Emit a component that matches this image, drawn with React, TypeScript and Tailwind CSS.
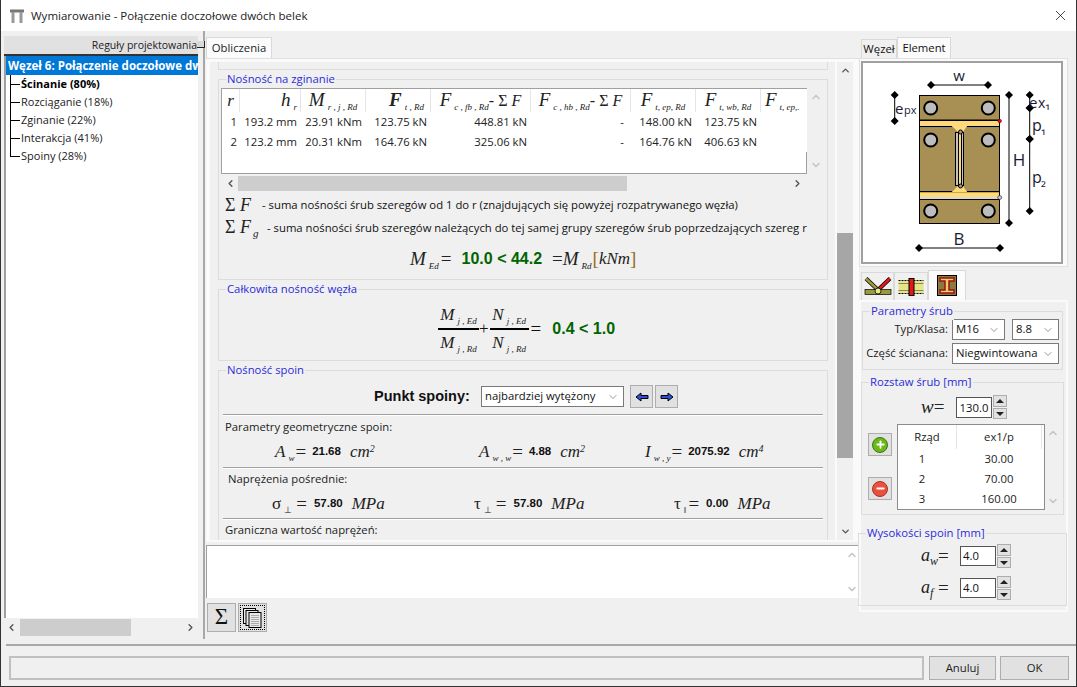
import { ReactNode } from "react";
import { ChevronDown, ChevronLeft, ChevronRight, ChevronUp, Plus, Minus, X } from "lucide-react";

const serif = "[font-family:'Liberation_Serif',serif]";
const arial = "[font-family:'Liberation_Sans',sans-serif]";

function Sym({ b, s, big, bold, plain }: { b: string; s?: string; big?: boolean; bold?: boolean; plain?: boolean }) {
  return (
    <span className={`${serif} ${plain ? "" : "italic"} whitespace-nowrap text-[#222] ${big ? "text-[19px]" : "text-[17px]"} ${bold ? "font-bold" : ""}`}>
      {b}
      {s && <span className="text-[9px] ml-[3px] align-[-4px] font-normal">{s}</span>}
    </span>
  );
}

function Group({ title, className, children }: { title: string; className: string; children?: ReactNode }) {
  return (
    <div className={`relative border border-[#dcdcdc] ${className}`}>
      <span className="absolute top-[-10px] left-[7px] bg-[#f0f0f0] px-px leading-[18px] text-[#2b2bd9] whitespace-nowrap">{title}</span>
      {children}
    </div>
  );
}

function Select({ text, className }: { text: string; className: string }) {
  return (
    <div className={`flex items-center justify-between bg-white border border-[#7a7a7a] pl-[3px] pr-[4px] whitespace-nowrap ${className}`}>
      <span>{text}</span>
      <ChevronDown size={12} strokeWidth={1} className="text-[#333]" />
    </div>
  );
}

function Spin() {
  return (
    <div className="flex flex-col ml-px">
      <div className="w-[14px] h-[12px] bg-[#e1e1e1] border border-[#adadad] flex items-center justify-center">
        <div className="w-0 h-0 border-x-[4px] border-x-transparent border-b-[4px] border-b-[#222]" />
      </div>
      <div className="w-[14px] h-[11px] mt-px bg-[#e1e1e1] border border-[#adadad] flex items-center justify-center">
        <div className="w-0 h-0 border-x-[4px] border-x-transparent border-t-[4px] border-t-[#222]" />
      </div>
    </div>
  );
}

function Hr({ className }: { className: string }) {
  return <div className={`mx-[4px] h-[2px] border-t border-b border-t-[#a0a0a0] border-b-white ${className}`} />;
}

function Dim({ x1, y1, x2, y2 }: { x1: number; y1: number; x2: number; y2: number }) {
  const pts = [
    [x1, y1],
    [x2, y2],
  ];
  return (
    <g>
      <line x1={x1} y1={y1} x2={x2} y2={y2} stroke="#000" />
      {pts.map(([x, y]) => (
        <path key={`${x}-${y}`} d={`M${x - 4} ${y}L${x} ${y - 4}L${x + 4} ${y}L${x} ${y + 4}Z`} fill="#000" />
      ))}
    </g>
  );
}

function Bolt({ x, y }: { x: number; y: number }) {
  return <circle cx={x} cy={y} r="6.5" fill="#bdbdbd" stroke="#000" strokeWidth="2" />;
}

function Diagram() {
  const label = { fontFamily: "'Open Sans', sans-serif", fill: "#1a1a33" };
  return (
    <svg viewBox="864 63 198 199" className="w-full h-full block">
      <rect x="920.5" y="95.5" width="80" height="128" fill="#a89054" stroke="#000" />
      {[108, 140, 211].map((y) => (
        <g key={y}>
          <Bolt x={931.7} y={y} />
          <Bolt x={989.3} y={y} />
        </g>
      ))}
      {/* gorny pas */}
      <rect x="921" y="119.5" width="79" height="1.5" fill="#000" />
      <rect x="921" y="121" width="79" height="5" fill="#ffd97a" />
      <path d="M921 126.5H953M968 126.5H1000" stroke="#000" />
      <path d="M921 127.5H953M968 127.5H1000" stroke="#8a8a8a" />
      <path d="M953 126L959 132H964L968 126Z" fill="#ffd97a" />
      <circle cx="1000.7" cy="121" r="1.8" fill="#e01010" stroke="#600" strokeWidth="0.5" />
      {/* srodnik */}
      <rect x="956.5" y="132.5" width="8" height="53" fill="#c4c4c4" stroke="#000" />
      <rect x="960" y="133" width="2" height="52" fill="#ffd97a" />
      <path d="M959.5 133V185M962.5 133V185" stroke="#000" />
      <circle cx="961.5" cy="132" r="2" fill="#9a9a9a" stroke="#000" />
      {/* dolny pas */}
      <path d="M921 191.5H953M968 191.5H1000" stroke="#000" />
      <path d="M953 192L959 186H964L968 192Z" fill="#ffd97a" />
      <circle cx="961.500" cy="186" r="2" fill="#9a9a9a" stroke="#000" />
      <rect x="921" y="192" width="79" height="5" fill="#ffd97a" />
      <path d="M921 192.5H1000" stroke="#c9a84a" />
      <rect x="921" y="197" width="79" height="2" fill="#d8d8d8" />
      <path d="M921 199.5H1000" stroke="#000" />
      <circle cx="1000.7" cy="197.500" r="2" fill="#c9c9c9" stroke="#000" strokeWidth="0.5" />

      <Dim x1={932} y1={85} x2={989} y2={85} />
      <Dim x1={920} y1={248} x2={1001} y2={248} />
      <Dim x1={1010} y1={95} x2={1010} y2={223} />
      <Dim x1={1030.7} y1={95} x2={1030.7} y2={108} />
      <Dim x1={1030.7} y1={108} x2={1030.7} y2={139} />
      <Dim x1={1030.7} y1={139} x2={1030.7} y2={211} />
      <Dim x1={895.7} y1={95} x2={895.7} y2={121} />

      <text x="960" y="81" textAnchor="middle" fontSize="15" style={label}>w</text>
      <text x="960" y="245" textAnchor="middle" fontSize="17" style={label}>B</text>
      <text x="1020" y="166" textAnchor="middle" fontSize="17" style={label}>H</text>
      <text x="896" y="114" fontSize="15" style={label}>e</text>
      <text x="905" y="114" fontSize="11" style={label}>px</text>
      <text x="1030" y="108" fontSize="15" style={label}>e</text>
      <text x="1039" y="108" fontSize="14" style={label}>x₁</text>
      <text x="1033" y="131" fontSize="16" style={label}>p</text>
      <text x="1042" y="133" fontSize="14" style={label}>₁</text>
      <text x="1033" y="183" fontSize="16" style={label}>p</text>
      <text x="1042" y="185" fontSize="14" style={label}>₂</text>
    </svg>
  );
}

function Arrow({ right }: { right?: boolean }) {
  return (
    <div className="w-[23px] h-[23px] bg-[#e1e1e1] border border-[#adadad] flex items-center justify-center">
      <svg width="14" height="10" viewBox="0 0 14 10" className={right ? "rotate-180" : ""}>
        <path d="M1 5L6 1V3.5H13V6.5H6V9Z" fill="#2b50d8" stroke="#000" />
      </svg>
    </div>
  );
}

const cols = ["w-[18px]", "w-[61px]", "w-[65px]", "w-[65px]", "w-[100px]", "w-[100px]", "w-[65px]", "w-[65px]", "w-[44px]"];
const rows = [
  ["1", "193.2 mm", "23.91 kNm", "123.75 kN", "448.81 kN", "-", "148.00 kN", "123.75 kN", ""],
  ["2", "123.2 mm", "20.31 kNm", "164.76 kN", "325.06 kN", "-", "164.76 kN", "406.63 kN", ""],
];

function BendTable() {
  return (
    <div className="relative w-[586px] h-[86px] bg-white border-l border-y border-[#a0a0a0] overflow-hidden">
      <div className="absolute right-0 bottom-0 w-px h-[21px] bg-[#a0a0a0]" />
      <div className="flex h-[23px] items-center whitespace-nowrap">
        <div className={`${cols[0]} h-full border-r border-[#e5e5e5] flex items-center justify-center`}><Sym b="r" /></div>
        <div className={`${cols[1]} h-full border-r border-[#e5e5e5] flex items-center justify-end pr-[3px]`}><Sym b="h" s="r" big /></div>
        <div className={`${cols[2]} h-full border-r border-[#e5e5e5] flex items-center justify-center`}><Sym b="M" s="r , j , Rd" big /></div>
        <div className={`${cols[3]} h-full border-r border-[#e5e5e5] flex items-center justify-end pr-[6px]`}><Sym b="F" s="t , Rd" bold big /></div>
        <div className={`${cols[4]} h-full border-r border-[#e5e5e5] flex items-center justify-center`}><Sym b="F" s="c , fb , Rd" big /><span className={`${serif} text-[16px] text-[#222]`}>- Σ <i>F</i></span></div>
        <div className={`${cols[5]} h-full border-r border-[#e5e5e5] flex items-center justify-center`}><Sym b="F" s="c , hb , Rd" big /><span className={`${serif} text-[16px] text-[#222]`}>- Σ <i>F</i></span></div>
        <div className={`${cols[6]} h-full border-r border-[#e5e5e5] flex items-center justify-center`}><Sym b="F" s="t, ep, Rd" big /></div>
        <div className={`${cols[7]} h-full border-r border-[#e5e5e5] flex items-center justify-center`}><Sym b="F" s="t, wb, Rd" big /></div>
        <div className={`${cols[8]} h-full flex items-center pl-[4px]`}><Sym b="F" s="t, ep,." big /></div>
      </div>
      <div>
        {rows.map((r) => (
          <div key={r[0]} className="flex h-[20px] items-center whitespace-nowrap text-[#222]">
            {r.map((c, i) => (
              <div key={i} className={`${cols[i]} text-right ${i === 0 ? "pr-[3px]" : i === 5 ? "pr-[7px]" : "pr-[4px]"}`}>{c}</div>
            ))}
          </div>
        ))}
      </div>
    </div>
  );
}

function Value({ v, unit, sup, gap }: { v: string; unit: string; sup?: string; gap: string }) {
  return (
    <>
      <b className={`${gap} ${arial} text-[11.5px]`}>{v}</b>
      <span className={`${serif} italic text-[17px] ml-[9px] text-[#222]`}>{unit}{sup && <sup className="text-[10px]">{sup}</sup>}</span>
    </>
  );
}

function Content() {
  return (
    <div className="h-[478px] w-[625px] bg-[#f0f0f0] overflow-hidden pl-[8px]">
      <div className="h-[8px] w-[610px] border-x border-b border-[#dcdcdc]" />
      <Group title="Nośność na zginanie" className="mt-[9px] w-[610px] h-[201px] pt-[8px] pl-[2px]">
        <div className="flex">
          <BendTable />
          <div className="w-[16px] h-[86px] flex flex-col justify-between items-center py-[3px] text-[#c4c4c4] ml-[1px]">
            <ChevronUp size={12} strokeWidth={3} />
            <ChevronDown size={12} strokeWidth={3} />
          </div>
        </div>
        <div className="mt-[2px] w-[585px] h-[15px] flex items-center text-[#555]">
          <ChevronLeft size={11} strokeWidth={3} className="ml-[2px] w-[15px]" />
          <div className="w-[389px] h-full bg-[#cdcdcd]" />
          <ChevronRight size={11} strokeWidth={3} className="ml-auto mr-[3px]" />
        </div>
        <div className="flex items-center h-[20px] mt-[4px] pl-[4px] whitespace-nowrap w-[585px] overflow-hidden">
          <span className={`${serif} text-[18px] w-[37px] text-[#222]`}>Σ <i>F</i></span>
          <span>- suma nośności śrub szeregów od 1 do r (znajdujących się powyżej rozpatrywanego węzła)</span>
        </div>
        <div className="flex items-center h-[20px] mt-[3px] pl-[4px] whitespace-nowrap w-[585px]">
          <span className={`${serif} text-[18px] w-[42px] shrink-0 text-[#222]`}>Σ <i>F</i><span className="italic text-[11px] ml-[2px] align-[-4px]">g</span></span>
          <span>- suma nośności śrub szeregów należących do tej samej grupy szeregów śrub poprzedzających szereg r</span>
        </div>
        <div className="flex items-center h-[24px] mt-[9px] pl-[189px] whitespace-nowrap">
          <Sym b="M" s="Ed" big />
          <span className={`${serif} text-[19px] ml-[2px] text-[#222]`}>=</span>
          <span className={`ml-[10px] text-[16px] font-bold text-[#006400] ${arial}`}>10.0 &lt; 44.2</span>
          <span className={`${serif} text-[19px] ml-[10px] text-[#222]`}>=</span>
          <Sym b="M" s="Rd" big />
          <span className={`${serif} text-[19px] ml-[1px] text-[#9a6a1c]`}>[</span>
          <span className={`${serif} italic text-[17px] text-[#222]`}>kNm</span>
          <span className={`${serif} text-[19px] text-[#9a6a1c]`}>]</span>
        </div>
      </Group>
      <Group title="Całkowita nośność węzła" className="mt-[9px] w-[610px] h-[72px] flex items-center pl-[219px] pt-[8px]">
        <div className="flex items-center whitespace-nowrap">
          <div className="flex flex-col items-center w-[41px]">
            <div className="h-[21px] flex items-end"><Sym b="M" s="j , Ed" /></div>
            <div className="w-full h-[2px] bg-black" />
            <div className="h-[21px] flex items-start"><Sym b="M" s="j , Rd" /></div>
          </div>
          <span className={`${serif} text-[17px]`}>+</span>
          <div className="flex flex-col items-center w-[39px] ml-[1px]">
            <div className="h-[21px] flex items-end"><Sym b="N" s="j , Ed" /></div>
            <div className="w-full h-[2px] bg-black" />
            <div className="h-[21px] flex items-start"><Sym b="N" s="j , Rd" /></div>
          </div>
          <span className={`${serif} text-[19px] ml-[2px]`}>=</span>
          <span className={`ml-[11px] text-[16px] font-bold text-[#006400] ${arial}`}>0.4 &lt; 1.0</span>
        </div>
      </Group>
      <Group title="Nośność spoin" className="mt-[9px] w-[610px] h-[200px] pt-[14px]">
        <div className="flex items-center h-[23px] pl-[155px]">
          <span className={`text-[14.5px] font-bold text-[#111] w-[107px] ${arial}`}>Punkt spoiny:</span>
          <Select text="najbardziej wytężony" className="w-[143px] h-[21px]" />
          <div className="flex gap-[2px] ml-[6px]">
            <Arrow />
            <Arrow right />
          </div>
        </div>
        <Hr className="mt-[6px]" />
        <div className="pl-[6px] h-[19px] mt-[1px] leading-[19px] text-[#222]">Parametry geometryczne spoin:</div>
        <div className="flex h-[26px] mt-[3px] items-center whitespace-nowrap">
          <div className="w-[204px] pl-[56px] flex items-center"><Sym b="A" s="w" /><span className={`${serif} text-[19px] ml-px text-[#222]`}>=</span><Value v="21.68" unit="cm" sup="2" gap="ml-[6px]" /></div>
          <div className="w-[222px] pl-[56px] flex items-center"><Sym b="A" s="w , w" /><span className={`${serif} text-[19px] ml-px text-[#222]`}>=</span><Value v="4.88" unit="cm" sup="2" gap="ml-[6px]" /></div>
          <div className="flex items-center"><Sym b="I" s="w , y" /><span className={`${serif} text-[19px] ml-px text-[#222]`}>=</span><Value v="2075.92" unit="cm" sup="4" gap="ml-[6px]" /></div>
        </div>
        <Hr className="mt-[2px]" />
        <div className="pl-[9px] h-[19px] leading-[19px] text-[#222]">Naprężenia pośrednie:</div>
        <div className="flex h-[26px] mt-[3px] items-center whitespace-nowrap">
          <div className="w-[255px] pl-[53px] flex items-center"><Sym b="σ" s="⊥" plain /><span className={`${serif} text-[19px] ml-[4px] text-[#222]`}>=</span><Value v="57.80" unit="MPa" gap="ml-[7px]" /></div>
          <div className="w-[200px] flex items-center"><Sym b="τ" s="⊥" plain /><span className={`${serif} text-[19px] ml-[4px] text-[#222]`}>=</span><Value v="57.80" unit="MPa" gap="ml-[7px]" /></div>
          <div className="flex items-center"><Sym b="τ" s="‖" plain /><span className={`${serif} text-[19px] ml-[2px] text-[#222]`}>=</span><Value v="0.00" unit="MPa" gap="ml-[7px]" /></div>
        </div>
        <Hr className="mt-[1px]" />
        <div className="pl-[6px] h-[19px] leading-[19px] text-[#222]">Graniczna wartość naprężeń:</div>
      </Group>
    </div>
  );
}

const treeItems = ["Ścinanie (80%)", "Rozciąganie (18%)", "Zginanie (22%)", "Interakcja (41%)", "Spoiny (28%)"];

function Tree() {
  return (
    <div className="flex-1 bg-white border-l-2 border-[#a0a0a0] overflow-hidden">
      <div className="h-[19px] bg-[#0078d7] text-white font-bold text-[11.5px] pl-[2px] leading-[19px] whitespace-nowrap overflow-hidden">
        Węzeł 6: Połączenie doczołowe dwóch belek
      </div>
      <div className="pl-[4px]">
        {treeItems.map((t, i) => (
          <div key={t} className="flex h-[18px] items-stretch">
            <div className="w-[10px] flex flex-col shrink-0">
              <div className="flex-1 border-l border-b border-black" />
              <div className={`flex-1 ${i < treeItems.length - 1 ? "border-l border-black" : ""}`} />
            </div>
            <span className={`leading-[18px] pl-px text-[11px] ${i === 0 ? "font-bold text-[#000]" : "text-[#222]"}`}>{t}</span>
          </div>
        ))}
      </div>
    </div>
  );
}

function WeldHeight({ sub }: { sub: string }) {
  return (
    <div className="flex items-center h-[24px] pl-[62px]">
      <div className="w-[17px]">
        <span className={`${serif} italic text-[18px] text-[#222]`}>a<span className="text-[12px] align-[-4px]">{sub}</span></span>
      </div>
      <span className={`${serif} text-[19px] w-[22px] text-[#222]`}>=</span>
      <div className="w-[36px] h-[20px] border border-[#555] bg-white leading-[18px] pl-[2px]">4.0</div>
      <Spin />
    </div>
  );
}

function RightPane() {
  return (
    <div className="w-[209px] pt-[6px] shrink-0">
      <div className="flex h-[21px] items-end pl-[2px]">
        <div className="w-[36px] h-[19px] bg-[#f0f0f0] border border-b-0 border-[#d9d9d9] leading-[18px] text-center whitespace-nowrap">Węzeł</div>
        <div className="w-[54px] h-[21px] bg-[#fbfbfb] border border-b-0 border-[#d9d9d9] leading-[20px] text-center">Element</div>
      </div>
      <div className="h-[209px] bg-[#fafafa] border border-[#e0e0e0] pt-[2px] pl-px">
        <div className="w-[202px] h-[203px] bg-white border-2 border-[#a0a0a0] overflow-hidden">
          <Diagram />
        </div>
      </div>
      <div className="flex items-end h-[33px] pl-[2px]">
        <div className="w-[33px] h-[28px] bg-[#f0f0f0] border border-b-0 border-[#d9d9d9] flex items-center justify-center">
          <svg width="28" height="20" viewBox="0 0 28 20">
            <rect x="1" y="12.5" width="26" height="5" fill="#9a9a3c" stroke="#000" strokeWidth="0.7" />
            <path d="M2 1.500L13 12" stroke="#000" strokeWidth="4" />
            <path d="M2 1.500L13 12" stroke="#9a9a3c" strokeWidth="2.500" />
            <path d="M26 1.500L15 12" stroke="#000" strokeWidth="4" />
            <path d="M26 1.500L15 12" stroke="#e01818" strokeWidth="2.500" />
            <circle cx="14" cy="14" r="3" fill="#e6e68a" stroke="#000" strokeWidth="0.8" />
          </svg>
        </div>
        <div className="w-[34px] h-[28px] bg-[#f0f0f0] border border-b-0 border-[#d9d9d9] flex items-center justify-center">
          <svg width="26" height="18" viewBox="0 0 26 18">
            <rect x="0.500" y="2.500" width="25" height="13" fill="#e4e48a" />
            <path d="M0.500 2.500H25.500M0.500 15.500H25.500" stroke="#000" strokeDasharray="2 1" />
            <path d="M0.500 5.500H25.500M0.500 12.500H25.500" stroke="#8a8a50" />
            <rect x="11" y="0.500" width="5" height="17" fill="#e01818" stroke="#000" />
          </svg>
        </div>
        <div className="w-[38px] h-[30px] bg-[#fbfbfb] border border-b-0 border-[#d9d9d9] flex items-center justify-center">
          <svg width="20" height="21" viewBox="0 0 20 21">
            <rect x="0.500" y="0.500" width="19" height="20" fill="#8a7a40" stroke="#000" />
            <path d="M3 3H17V6H12V15H17V18H3V15H8V6H3Z" fill="#e8d070" stroke="#a01010" strokeWidth="1.500" />
          </svg>
        </div>
      </div>
      <div className="h-[312px] bg-[#f0f0f0] border-2 border-[#fafafa]">
        <Group title="Parametry śrub" className="ml-[1px] mt-[9px] w-[201px] h-[59px] pt-[7px]">
          <div className="flex items-center h-[21px]">
            <span className="w-[85px] text-right text-[#222]">Typ/Klasa:</span>
            <Select text="M16" className="ml-[4px] w-[53px] h-[21px]" />
            <Select text="8.8" className="ml-[7px] w-[47px] h-[21px]" />
          </div>
          <div className="flex items-center h-[21px] mt-[3px]">
            <span className="w-[85px] text-right text-[#222] whitespace-nowrap">Część ścianana:</span>
            <Select text="Niegwintowana" className="ml-[4px] w-[107px] h-[21px]" />
          </div>
        </Group>
        <Group title="Rozstaw śrub [mm]" className="mt-[12px] w-[203px] h-[133px] pt-[12px]">
          <div className="flex items-center h-[24px] pl-[59px]">
            <span className={`${serif} italic text-[19px] w-[35px] text-[#222]`}>w<span className="not-italic">=</span></span>
            <div className="w-[36px] h-[21px] border border-[#555] bg-white leading-[19px] text-center">130.0</div>
            <Spin />
          </div>
          <div className="flex mt-[5px]">
            <div className="w-[35px] pl-[6px] pt-[9px] shrink-0">
              <div className="w-[24px] h-[23px] bg-[#e1e1e1] border border-[#adadad] flex items-center justify-center">
                <div className="w-[16px] h-[16px] rounded-full bg-[#6cb81a] border border-[#3c7a0a] flex items-center justify-center">
                  <Plus size={11} strokeWidth={4} className="text-white" />
                </div>
              </div>
              <div className="w-[24px] h-[23px] mt-[21px] bg-[#e1e1e1] border border-[#adadad] flex items-center justify-center">
                <div className="w-[16px] h-[16px] rounded-full bg-[#e85040] border border-[#b03020] flex items-center justify-center">
                  <Minus size={11} strokeWidth={4} className="text-white" />
                </div>
              </div>
            </div>
            <div className="w-[148px] h-[86px] bg-white border border-[#8c8c8c] shrink-0">
              <div className="flex h-[24px] items-center">
                <div className="w-[59px] shrink-0 text-center h-full leading-[23px] border-r border-[#e5e5e5] text-[#222]">Rząd</div>
                <div className="w-[85px] shrink-0 text-center h-full leading-[23px] border-r border-[#e5e5e5] text-[#222]">ex1/p</div>
              </div>
              {[["1", "30.00"], ["2", "70.00"], ["3", "160.00"]].map(([a, b]) => (
                <div key={a} className="flex h-[20px] items-center text-[#222]">
                  <div className="w-[48px] shrink-0 text-center">{a}</div>
                  <div className="w-[106px] shrink-0 text-center">{b}</div>
                </div>
              ))}
            </div>
            <div className="w-[16px] h-[86px] flex flex-col justify-between items-center py-[3px] text-[#c4c4c4]">
              <ChevronUp size={12} strokeWidth={3} />
              <ChevronDown size={12} strokeWidth={3} />
            </div>
          </div>
        </Group>
        <Group title="Wysokości spoin [mm]" className="mt-[18px] -ml-[3px] w-[209px] h-[73px] pt-[10px]">
          <WeldHeight sub="w" />
          <div className="mt-[8px]">
            <WeldHeight sub="f" />
          </div>
        </Group>
      </div>
    </div>
  );
}

export default function App() {
  return (
    <div className="relative w-[1077px] h-[687px] flex flex-col bg-[#f0f0f0] border-x border-b border-[#333] overflow-hidden text-[11.3px] text-[#111] [font-family:'Open_Sans',sans-serif]">
      <div className="h-[31px] bg-white flex items-center shrink-0">
        <svg width="14" height="14" viewBox="0 0 14 14" className="ml-[9px]">
          <path d="M0 0.5H14V3.5H0Z" fill="#777" />
          <path d="M1.5 3V14H4.5V3ZM9.5 3V14H12.5V3Z" fill="#999" />
        </svg>
        <span className="ml-[7px] text-[11.5px] text-[#222]">Wymiarowanie - Połączenie doczołowe dwóch belek</span>
        <X size={17} strokeWidth={1} className="ml-auto mr-[7px] text-black" />
      </div>

      <div className="flex flex-1 min-h-0 relative">
        <div className="w-[194px] ml-[3px] pt-[5px] pb-[8px] flex flex-col shrink-0">
          <div className="h-[20px] bg-[#e1e1e1] border-b-2 border-[#333] text-right leading-[18px] pr-px text-[10.5px] text-[#222] whitespace-nowrap">Reguły projektowania</div>
          <Tree />
          <div className="h-[17px] mt-px flex items-center text-[#555]">
            <ChevronLeft size={11} strokeWidth={3} className="ml-[2px]" />
            <div className="ml-[3px] w-[111px] h-full bg-[#cdcdcd]" />
            <ChevronRight size={11} strokeWidth={3} className="ml-auto mr-[2px]" />
          </div>
        </div>
        <div className="w-[6px] ml-[1px] mb-[5px] border-r-2 border-[#a8a8a8] shrink-0" />
        <div className="absolute left-[196px] top-[10px] w-[8px] h-[7px] bg-[#d8d8d8] border-b border-r border-[#222]" />

        <div className="w-[653px] pt-[6px] ml-px shrink-0">
          <div className="w-[66px] h-[21px] bg-[#fbfbfb] border border-b-0 border-[#d9d9d9] text-center leading-[20px] text-[#222]">Obliczenia</div>
          <div className="h-[484px] bg-[#fafafa] border-t border-[#e0e0e0] pt-[3px] pl-[4px] flex">
            <Content />
            <div className="w-[16px] ml-[2px] h-[478px] bg-[#f0f0f0] flex flex-col items-center text-[#555] shrink-0">
              <ChevronUp size={11} strokeWidth={3} className="mt-[3px]" />
              <div className="w-full h-[225px] mt-[157px] bg-[#a6a6a6]" />
              <ChevronDown size={11} strokeWidth={3} className="mt-auto mb-[3px]" />
            </div>
          </div>
          <div className="h-[53px] mt-[3px] bg-white border-l border-t border-[#a0a0a0] flex justify-end">
            <div className="w-[14px] flex flex-col justify-between items-center py-[3px] text-[#c4c4c4]">
              <ChevronUp size={12} strokeWidth={3} />
              <ChevronDown size={12} strokeWidth={3} />
            </div>
          </div>
          <div className="flex gap-[2px] mt-[5px] pl-[1px]">
            <div className={`w-[29px] h-[29px] bg-[#e1e1e1] border border-[#adadad] flex items-center justify-center text-[23px] text-[#111] ${serif}`}>Σ</div>
            <div className="w-[29px] h-[29px] bg-[#e1e1e1] border border-[#adadad] p-px">
              <div className="w-full h-full border border-dotted border-black flex items-center justify-center">
                <svg width="19" height="20" viewBox="0 0 19 20">
                  <rect x="0.5" y="0.5" width="12" height="15" fill="#e8e8e8" stroke="#000" />
                  <rect x="3" y="2.5" width="12" height="15" fill="#e8e8e8" stroke="#000" />
                  <rect x="6" y="4.5" width="12" height="15" fill="#e8e8e8" stroke="#000" />
                  <path d="M8 7.5H16M8 9.5H16M8 11.5H16M8 13.5H16M8 15.5H16M8 17.5H16" stroke="#aaa" />
                </svg>
              </div>
            </div>
          </div>
        </div>

        <RightPane />
      </div>

      <div className="h-[43px] shrink-0 border-t-2 border-[#a8a8a8] ml-[5px] -mb-px">
        <div className="flex pt-[10px] pl-[3px]">
          <div className="w-[915px] h-[24px] border-2 border-[#c0c0c0] bg-[#f0f0f0]" />
          <div className="ml-[5px] w-[67px] h-[24px] bg-[#e1e1e1] border border-[#adadad] text-center leading-[22px] text-[#222]">Anuluj</div>
          <div className="ml-[4px] w-[69px] h-[24px] bg-[#e1e1e1] border border-[#adadad] text-center leading-[22px] text-[#222]">OK</div>
        </div>
      </div>
    </div>
  );
}
